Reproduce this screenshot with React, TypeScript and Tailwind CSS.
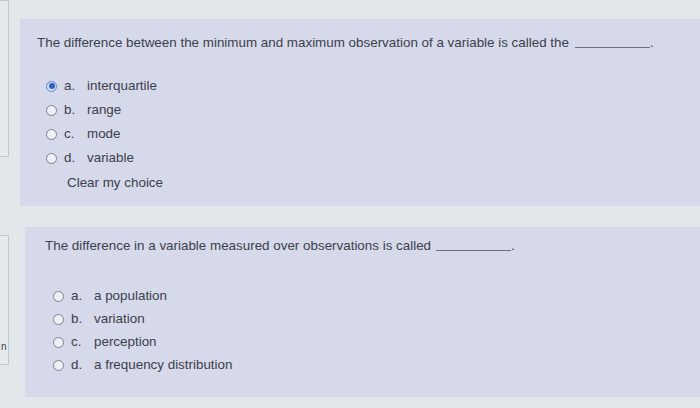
import React from "react";

function Radio({ checked }: { checked?: boolean }) {
  if (checked) {
    return (
      <span className="w-[11px] h-[11px] rounded-full bg-[#cfe0f5] border border-[#5b86c9] flex items-center justify-center shrink-0">
        <span className="w-[6px] h-[6px] rounded-full bg-[#2f63c4]" />
      </span>
    );
  }
  return <span className="w-[11px] h-[11px] rounded-full bg-[#eef0f6] border border-[#7d818c] shrink-0" />;
}

function Option({ letter, text, checked, h }: { letter: string; text: string; checked?: boolean; h: string }) {
  return (
    <div className={"flex items-center " + h}>
      <Radio checked={checked} />
      <span className="ml-[7px] w-[23px]">{letter}</span>
      <span>{text}</span>
    </div>
  );
}

export default function App() {
  return (
    <div
      className="w-[700px] h-[408px] overflow-hidden bg-[#e1e7ea] text-[#3b3f4a] text-[13.4px] flex"
      style={{ fontFamily: '"Liberation Sans", Arial, sans-serif' }}
    >
      <div className="w-[9px] shrink-0 flex flex-col">
        <div className="h-[157px] border border-l-0 border-[#c4c8cc] bg-[#e4e9ec]" />
        <div className="h-[78px]" />
        <div className="h-[130px] border border-l-0 border-[#c4c8cc] bg-[#e4e9ec] flex items-end pb-[12px] text-[10px] text-[#444] leading-none">
          <span className="ml-[1px]">n</span>
        </div>
      </div>
      <div className="flex-1 flex flex-col pt-[19px]">
        <div className="ml-[11px] h-[187px] bg-[#d6d9ea] pl-[17px] pt-[15px]">
          <div className="flex items-end leading-[17px]">
            <span>The difference between the minimum and maximum observation of a variable is called the</span>
            <span className="ml-[6px] w-[75px] border-b border-[#6b6f78] mb-[3px]" />
            <span>.</span>
          </div>
          <div className="mt-[23px] pl-[9px] flex flex-col">
            <Option h="h-[24px]" letter="a." text="interquartile" checked />
            <Option h="h-[24px]" letter="b." text="range" />
            <Option h="h-[24px]" letter="c." text="mode" />
            <Option h="h-[24px]" letter="d." text="variable" />
            <div className="pl-[21px] h-[26px] flex items-center">Clear my choice</div>
          </div>
        </div>
        <div className="h-[21px]" />
        <div className="ml-[16px] h-[170px] bg-[#d6d9ea] pl-[20px] pt-[10px]">
          <div className="flex items-end leading-[17px]">
            <span>The difference in a variable measured over observations is called</span>
            <span className="ml-[5px] w-[75px] border-b border-[#6b6f78] mb-[3px]" />
            <span>.</span>
          </div>
          <div className="mt-[31px] pl-[8px] flex flex-col">
            <Option h="h-[23px]" letter="a." text="a population" />
            <Option h="h-[23px]" letter="b." text="variation" />
            <Option h="h-[23px]" letter="c." text="perception" />
            <Option h="h-[23px]" letter="d." text="a frequency distribution" />
          </div>
        </div>
      </div>
    </div>
  );
}
